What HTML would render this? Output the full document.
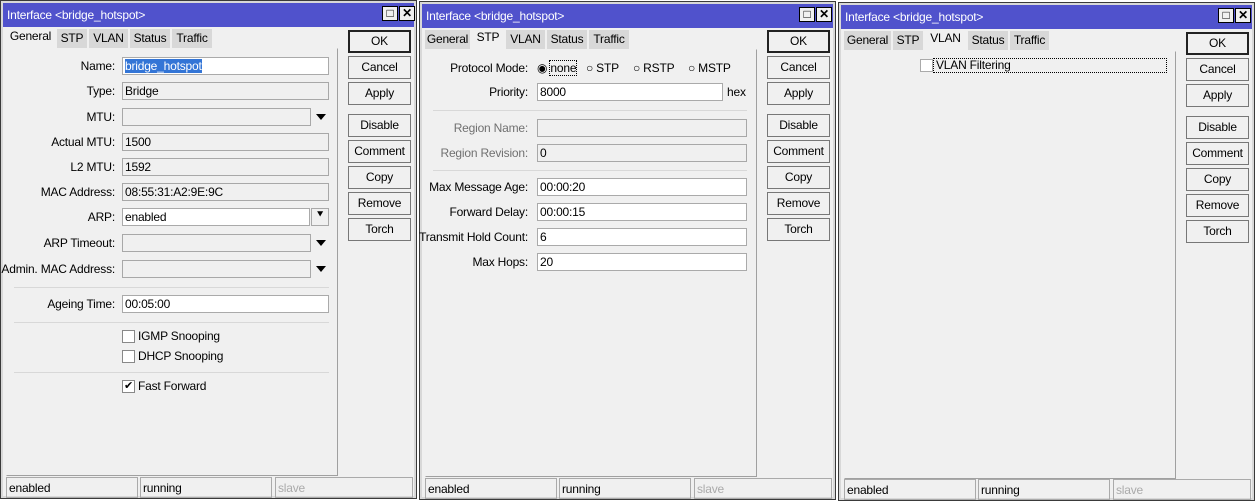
<!DOCTYPE html>
<html><head><meta charset="utf-8"><style>
*{box-sizing:border-box;margin:0;padding:0}
body{width:1255px;height:502px;background:#fff;position:relative;overflow:hidden;font-family:"Liberation Sans",sans-serif;font-size:12px;color:#000;letter-spacing:-0.2px}
.win{position:absolute;width:417px;height:499px;background:#f0f0f0;border:1px solid #3a3a3a;box-shadow:inset 0 0 0 2px #d8d8d8}
.win *{position:absolute}
.tb{left:2px;top:2px;right:2px;height:24px;background:#5052cc;color:#fff;padding:5px 0 0 4px;font-size:12px;white-space:nowrap}
.wb{top:5px;width:16px;height:15px;background:#f0f0f0;border:1px solid #000;font-size:12px;line-height:12px;text-align:center;color:#000;font-weight:bold}
.tab{top:28px;height:19px;background:#d8d8d8;border-right:1px solid #f0f0f0;padding:2px 0 0 0;text-align:center}
.tab.on{background:#f0f0f0;top:26px;height:21px;padding-top:2px}
.panel{left:5px;top:47px;width:332px;height:428px;border:1px solid #a0a0a0;border-left-color:#f0f0f0;border-top-color:#f0f0f0}
.btn{left:347px;width:63px;height:23px;border:1px solid #777;background:#f0f0f0;text-align:center;padding-top:3px}
.btn.def{border:2px solid #222;padding-top:2px}
.lab{text-align:right;white-space:nowrap;padding-top:2px}
.gray{color:#707070}
.in{height:18px;border:1px solid #aaa;background:#fff;padding:1px 0 0 2px;white-space:nowrap}
.in.ro{background:#f0f0f0;border-color:#a8a8a8}
.arr{width:0;height:0;border-left:5px solid transparent;border-right:5px solid transparent;border-top:6px solid #000}
.sep{height:1px;background:#d8d8d8}
.cb{width:13px;height:13px;border:1px solid #888;background:#fff}
.st{top:476px;height:21px;border:1px solid #aaa;padding:3px 0 0 2px}
</style></head><body>

<!-- Window 1 -->
<div class="win" style="left:0;top:0">
<div class="tb">Interface &lt;bridge_hotspot&gt;</div>
<div class="wb" style="left:381px">□</div><div class="wb" style="left:398px">✕</div>
<div class="tab on" style="left:5px;width:50px">General</div>
<div class="tab" style="left:56px;width:31px">STP</div>
<div class="tab" style="left:88px;width:40px">VLAN</div>
<div class="tab" style="left:129px;width:41px">Status</div>
<div class="tab" style="left:171px;width:41px">Traffic</div>
<div class="panel"></div>
<div class="btn def" style="top:29px">OK</div>
<div class="btn" style="top:55px">Cancel</div>
<div class="btn" style="top:81px">Apply</div>
<div class="btn" style="top:113px">Disable</div>
<div class="btn" style="top:139px">Comment</div>
<div class="btn" style="top:165px">Copy</div>
<div class="btn" style="top:191px">Remove</div>
<div class="btn" style="top:217px">Torch</div>

<div class="lab" style="right:301px;top:56px">Name:</div><div class="in" style="left:121px;top:56px;width:207px"><span style="position:static;background:#3375d6;color:#fff">bridge_hotspot</span></div>
<div class="lab" style="right:301px;top:81px">Type:</div><div class="in ro" style="left:121px;top:81px;width:207px">Bridge</div>
<div class="lab" style="right:301px;top:107px">MTU:</div><div class="in ro" style="left:121px;top:107px;width:189px"></div><div class="arr" style="left:315px;top:113px"></div>
<div class="lab" style="right:301px;top:132px">Actual MTU:</div><div class="in ro" style="left:121px;top:132px;width:207px">1500</div>
<div class="lab" style="right:301px;top:157px">L2 MTU:</div><div class="in ro" style="left:121px;top:157px;width:207px">1592</div>
<div class="lab" style="right:301px;top:182px">MAC Address:</div><div class="in ro" style="left:121px;top:182px;width:207px">08:55:31:A2:9E:9C</div>
<div class="lab" style="right:301px;top:207px">ARP:</div><div class="in" style="left:121px;top:207px;width:188px">enabled</div><div class="in ro" style="left:310px;top:207px;width:18px;text-align:center;padding:0;font-size:11px">⯆</div>
<div class="lab" style="right:301px;top:233px">ARP Timeout:</div><div class="in ro" style="left:121px;top:233px;width:189px"></div><div class="arr" style="left:315px;top:239px"></div>
<div class="lab" style="right:301px;top:259px">Admin. MAC Address:</div><div class="in ro" style="left:121px;top:259px;width:189px"></div><div class="arr" style="left:315px;top:265px"></div>
<div class="sep" style="left:13px;top:286px;width:315px"></div>
<div class="lab" style="right:301px;top:294px">Ageing Time:</div><div class="in" style="left:121px;top:294px;width:207px">00:05:00</div>
<div class="sep" style="left:13px;top:321px;width:315px"></div>
<div class="cb" style="left:121px;top:329px"></div><div style="left:137px;top:328px">IGMP Snooping</div>
<div class="cb" style="left:121px;top:349px"></div><div style="left:137px;top:348px">DHCP Snooping</div>
<div class="sep" style="left:13px;top:371px;width:315px"></div>
<div class="cb" style="left:121px;top:379px;font-size:11px;line-height:11px;text-align:center">✔</div><div style="left:137px;top:378px">Fast Forward</div>
<div class="st" style="left:5px;width:132px">enabled</div>
<div class="st" style="left:139px;width:132px">running</div>
<div class="st gray" style="left:274px;width:138px;color:#aaa">slave</div>
</div>

<!-- Window 2 -->
<div class="win" style="left:419px;top:1px">
<div class="tb">Interface &lt;bridge_hotspot&gt;</div>
<div class="wb" style="left:379px">□</div><div class="wb" style="left:396px">✕</div>
<div class="tab" style="left:5px;width:46px">General</div>
<div class="tab on" style="left:52px;width:33px">STP</div>
<div class="tab" style="left:86px;width:40px">VLAN</div>
<div class="tab" style="left:127px;width:41px">Status</div>
<div class="tab" style="left:169px;width:41px">Traffic</div>
<div class="panel"></div>
<div class="btn def" style="top:28px">OK</div>
<div class="btn" style="top:54px">Cancel</div>
<div class="btn" style="top:80px">Apply</div>
<div class="btn" style="top:112px">Disable</div>
<div class="btn" style="top:138px">Comment</div>
<div class="btn" style="top:164px">Copy</div>
<div class="btn" style="top:190px">Remove</div>
<div class="btn" style="top:216px">Torch</div>

<div class="lab" style="right:307px;top:57px">Protocol Mode:</div>
<div style="left:117px;top:59px">◉ <span style="position:static;outline:1px dotted #000">none</span></div>
<div style="left:166px;top:59px">○ STP</div>
<div style="left:213px;top:59px">○ RSTP</div>
<div style="left:268px;top:59px">○ MSTP</div>
<div class="lab" style="right:307px;top:81px">Priority:</div><div class="in" style="left:117px;top:81px;width:186px">8000</div><div style="left:307px;top:83px">hex</div>
<div class="sep" style="left:13px;top:108px;width:314px"></div>
<div class="lab gray" style="right:307px;top:117px">Region Name:</div><div class="in ro" style="left:117px;top:117px;width:210px"></div>
<div class="lab gray" style="right:307px;top:142px">Region Revision:</div><div class="in ro" style="left:117px;top:142px;width:210px">0</div>
<div class="sep" style="left:13px;top:168px;width:314px"></div>
<div class="lab" style="right:307px;top:176px">Max Message Age:</div><div class="in" style="left:117px;top:176px;width:210px">00:00:20</div>
<div class="lab" style="right:307px;top:201px">Forward Delay:</div><div class="in" style="left:117px;top:201px;width:210px">00:00:15</div>
<div class="lab" style="right:307px;top:226px">Transmit Hold Count:</div><div class="in" style="left:117px;top:226px;width:210px">6</div>
<div class="lab" style="right:307px;top:251px">Max Hops:</div><div class="in" style="left:117px;top:251px;width:210px">20</div>
<div class="st" style="left:5px;width:132px">enabled</div>
<div class="st" style="left:139px;width:132px">running</div>
<div class="st" style="left:274px;width:138px;color:#aaa">slave</div>
</div>

<!-- Window 3 -->
<div class="win" style="left:838px;top:2px">
<div class="tb">Interface &lt;bridge_hotspot&gt;</div>
<div class="wb" style="left:379px">□</div><div class="wb" style="left:396px">✕</div>
<div class="tab" style="left:5px;width:48px">General</div>
<div class="tab" style="left:54px;width:31px">STP</div>
<div class="tab on" style="left:86px;width:42px">VLAN</div>
<div class="tab" style="left:129px;width:41px">Status</div>
<div class="tab" style="left:171px;width:40px">Traffic</div>
<div class="panel" style="top:48px"></div>
<div class="btn def" style="top:29px">OK</div>
<div class="btn" style="top:55px">Cancel</div>
<div class="btn" style="top:81px">Apply</div>
<div class="btn" style="top:113px">Disable</div>
<div class="btn" style="top:139px">Comment</div>
<div class="btn" style="top:165px">Copy</div>
<div class="btn" style="top:191px">Remove</div>
<div class="btn" style="top:217px">Torch</div>
<div class="cb" style="left:81px;top:56px;border-color:#aaa"></div>
<div style="left:95px;top:56px;width:232px;height:13px;outline:1px dotted #000;line-height:13px;padding-left:2px">VLAN Filtering</div>
<div class="st" style="left:5px;width:132px">enabled</div>
<div class="st" style="left:139px;width:132px">running</div>
<div class="st" style="left:274px;width:138px;color:#aaa">slave</div>
</div>
</body></html>
